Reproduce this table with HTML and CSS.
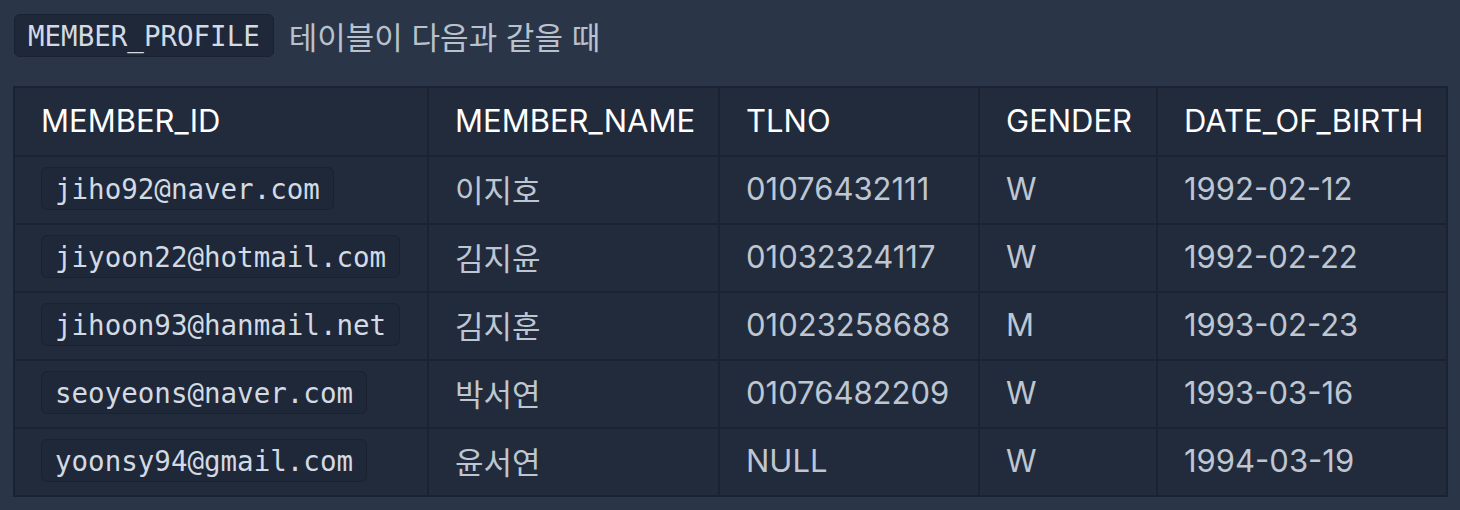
FILE: index.html
```html
<!DOCTYPE html>
<html lang="ko">
<head>
<meta charset="utf-8">
<link rel="stylesheet" href="styles.css">
</head>
<body>
<div class="page">
  <p class="intro"><code class="tag">MEMBER_PROFILE</code> 테이블이 다음과 같을 때</p>
  <table class="grid">
    <colgroup>
      <col class="c1"><col class="c2"><col class="c3"><col class="c4"><col class="c5">
    </colgroup>
    <thead>
      <tr><th>MEMBER_ID</th><th>MEMBER_NAME</th><th>TLNO</th><th>GENDER</th><th>DATE_OF_BIRTH</th></tr>
    </thead>
    <tbody>
      <tr><td><code class="cell-code">jiho92@naver.com</code></td><td>이지호</td><td>01076432111</td><td>W</td><td>1992-02-12</td></tr>
      <tr><td><code class="cell-code">jiyoon22@hotmail.com</code></td><td>김지윤</td><td>01032324117</td><td>W</td><td>1992-02-22</td></tr>
      <tr><td><code class="cell-code">jihoon93@hanmail.net</code></td><td>김지훈</td><td>01023258688</td><td>M</td><td>1993-02-23</td></tr>
      <tr><td><code class="cell-code">seoyeons@naver.com</code></td><td>박서연</td><td>01076482209</td><td>W</td><td>1993-03-16</td></tr>
      <tr><td><code class="cell-code">yoonsy94@gmail.com</code></td><td>윤서연</td><td>NULL</td><td>W</td><td>1994-03-19</td></tr>
    </tbody>
  </table>
</div>
</body>
</html>
```

FILE: styles.css
```css
html, body {
  margin: 0;
  padding: 0;
  background: #2a3547;
}
body {
  font-family: Inter, "Noto Sans CJK KR", sans-serif;
  color: #c3cad6;
}
.page {
  padding: 14px 13px 0 13px;
}
.intro {
  margin: 0 0 0 1px;
  height: 43px;
  display: flex;
  align-items: center;
  gap: 15px;
  font-size: 31px;
  color: #b9c1cd;
}
.tag, .cell-code {
  font-family: "DejaVu Sans Mono", "Liberation Mono", monospace;
  background: #1f2839;
  border: 1px solid #1a2130;
  border-radius: 6px;
  color: #d3dae4;
  box-sizing: border-box;
  display: inline-flex;
  align-items: center;
}
.tag {
  font-size: 27.5px;
  height: 43px;
  padding: 0 13px;
}
.grid {
  margin-top: 29px;
  border-collapse: collapse;
  width: 1433px;
  table-layout: fixed;
  background: #222b3c;
  border: 2px solid #1b2232;
}
.c1 { width: 414px; }
.c2 { width: 291px; }
.c3 { width: 260px; }
.c4 { width: 178px; }
.c5 { width: 290px; }
th, td {
  border: 2px solid #1b2232;
  padding: 0 0 3px 26px;
  text-align: left;
  white-space: nowrap;
  font-size: 31px;
}
th {
  height: 64px;
  font-weight: 400;
  color: #ffffff;
}
td {
  height: 63px;
  color: #bec6d2;
}
.cell-code {
  font-size: 27.5px;
  height: 43px;
  padding: 0 13px;
}
```
